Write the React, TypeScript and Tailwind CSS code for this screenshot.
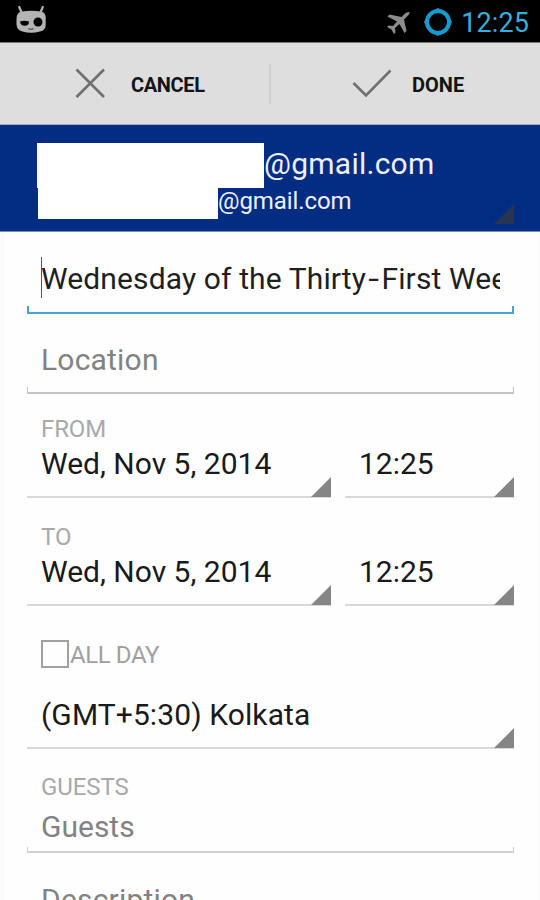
import type { ReactNode } from "react";

function Corner({ className }: { className: string }) {
  return (
    <svg className={`absolute right-0 h-5 w-5 ${className}`} viewBox="0 0 20 20">
      <path d="M20 0V20H0Z" fill="currentColor" />
    </svg>
  );
}

function Label({ children }: { children: ReactNode }) {
  return <div className="pl-3.5 text-[24px] leading-[24px] tracking-[-0.1px] text-[#a9a9a9]">{children}</div>;
}

function Spinner({ children, className = "" }: { children: ReactNode; className?: string }) {
  return (
    <div className={`relative border-b-2 border-[#d8d8d8] pb-[9px] pl-3.5 text-[30px] leading-[46px] text-[#1a1a1a] ${className}`}>
      {children}
      <Corner className="-bottom-px text-[#858585]" />
    </div>
  );
}

function DateRow({ label, date, time, className }: { label: string; date: string; time: string; className: string }) {
  return (
    <div className={className}>
      <Label>{label}</Label>
      <div className="flex gap-3.5">
        <Spinner className="w-[304px]">{date}</Spinner>
        <Spinner className="flex-1">{time}</Spinner>
      </div>
    </div>
  );
}

function StatusBar() {
  return (
    <div className="flex h-[42px] items-center bg-black pl-4 pr-[11px]">
      <svg className="mb-0.5 h-[30px] w-[31px]" viewBox="0 0 31 30">
        <path d="M3.200 2 5.800 8M26.800 2 24.200 8" stroke="#b4b4b4" strokeWidth="2.200" strokeLinecap="round" />
        <path d="M6 6.500Q15 5 25 6.500Q30 7 29.700 14V19Q30 25.500 24 26.500Q15 29 6.500 26.500Q.5 25 .5 19V14Q.5 7 6 6.500Z" fill="#b4b4b4" />
        <circle cx="22" cy="17" r="4.500" fill="#050505" />
        <circle cx="22" cy="17" r=".8" fill="#2a2a2a" />
        <path d="M4 16.500Q8.500 14.800 13 16.500Q13 20.800 8.800 20.800Q4.500 20.800 4 16.500Z" fill="#050505" />
        <path d="M12.500 23.500Q15 25 17.300 23.500" stroke="#444" strokeWidth="1.200" fill="none" />
      </svg>
      <div className="flex-1" />
      <svg className="mr-3.5 mt-[3px] h-6 w-6" viewBox="0 0 24 24">
        <path d="M23.500 1Q21 .6 19 2.500L15.500 6 3.500 3.500 1.500 5.500 11 10.500 7 15 2.500 14.500 1 16 5.500 18.500 8 23 9.500 21.500 9 17 13.500 13 18.500 22 20.500 20 18 8.500 21.500 5Q24 3 23.500 1Z" fill="#8c8c8c" />
      </svg>
      <svg className="mr-[9px] mt-px h-7 w-7" viewBox="0 0 28 28">
        <circle cx="14" cy="14" r="11" fill="none" stroke="#169bd0" strokeWidth="4" />
        <path d="M10.500 1.800 14 0 17.500 1.800ZM10.500 26.200 14 28 17.500 26.200ZM1.800 10.500 0 14 1.800 17.500ZM26.200 10.500 28 14 26.200 17.500Z" fill="#169bd0" />
      </svg>
      <div className="pt-[5px] text-[27px] leading-[37px] tracking-[0.1px] text-[#35afdf]">12:25</div>
    </div>
  );
}

function ActionBar() {
  return (
    <div className="flex h-[83px] items-center border-b border-t border-b-[#aaaac4] border-t-[#777] bg-[#dedede] text-[20px] font-bold text-[#141414]">
      <div className="flex w-[269px] items-center pl-[75px]">
        <svg className="mr-[25px] h-[31px] w-[31px]" viewBox="0 0 31 31">
          <path d="M1.500 1.500 29 29M29 1.500 1.500 29" stroke="#707070" strokeWidth="2.600" />
        </svg>
        <span className="pt-0.5 tracking-[-0.35px]">CANCEL</span>
      </div>
      <div className="h-10 w-0.5 bg-[#d0d0d0]" />
      <div className="flex flex-1 items-center pl-[81px]">
        <svg className="mr-[20px] h-[29px] w-10" viewBox="0 0 40 29">
          <path d="M1.500 14 14 26.500 38.500 1.500" stroke="#707070" strokeWidth="2.600" fill="none" />
        </svg>
        <span className="pt-0.5">DONE</span>
      </div>
    </div>
  );
}

function AccountHeader() {
  return (
    <div className="relative h-[107px] border-b border-[#8088b8] bg-[#022d82] pl-[37px] pt-[18px] text-[#eef0ff]">
      <div className="flex h-11">
        <div className="h-[45px] w-[227px] bg-white" />
        <span className="text-[30px] leading-[41px] tracking-[0.25px]">@gmail.com</span>
      </div>
      <div className="flex h-8 pl-px">
        <div className="h-8 w-[180px] bg-white" />
        <span className="text-[24px] leading-[28px] tracking-[-0.1px]">@gmail.com</span>
      </div>
      <Corner className="bottom-[7px] mr-[26px] text-[#263554]" />
    </div>
  );
}

export default function App() {
  return (
    <div className="h-[900px] w-[540px] overflow-hidden bg-[#fefefe] font-[Roboto,sans-serif]">
      <StatusBar />
      <ActionBar />
      <AccountHeader />
      <div className="h-[668px] border-l-4 border-r-2 border-[#fafafa] pl-[23px] pr-6">
        <div className="relative pl-3.5 pr-3.5 pt-5">
          <div className="overflow-hidden whitespace-nowrap text-[30px] leading-[54px] tracking-[0.12px] text-[#1f1f1f]">
            Wednesday of the Thirty<span className="inline-block scale-x-130 px-[3.5px]">-</span>First Week
          </div>
          <div className="absolute left-3.5 top-[25px] h-[41px] w-px bg-[#555]" />
        </div>
        <div className="h-2 border-x-2 border-b-2 border-[#4aa3d0]" />

        <div className="pl-3.5 pt-5 text-[30px] leading-[52px] tracking-[0.2px] text-[#828282]">Location</div>
        <div className="mt-px h-[7px] border-x border-b-2 border-[#c4c4c4]" />

        <DateRow label="FROM" date="Wed, Nov 5, 2014" time="12:25" className="pt-[23px]" />
        <DateRow label="TO" date="Wed, Nov 5, 2014" time="12:25" className="pt-[27px]" />

        <div className="flex items-center pl-3.5 pt-[34px] text-[24px] leading-[28px] text-[#a0a0a0]">
          <div className="mr-px h-7 w-7 border-2 border-[#a0a0a0]" />
          <span className="relative top-px tracking-[-0.4px]">ALL DAY</span>
        </div>

        <Spinner className="mt-6 tracking-[0.1px]">(GMT+5:30) Kolkata</Spinner>

        <div className="pt-[26px]">
          <Label>GUESTS</Label>
        </div>
        <div className="pl-3.5 pt-2 text-[30px] leading-[40px] text-[#828282]">Guests</div>
        <div className="h-1.5 border-x border-b-2 border-[#d0d0d0]" />

        <div className="pl-3.5 pt-[27px] text-[30px] leading-[40px] tracking-[0.2px] text-[#828282]">Description</div>
      </div>
    </div>
  );
}
